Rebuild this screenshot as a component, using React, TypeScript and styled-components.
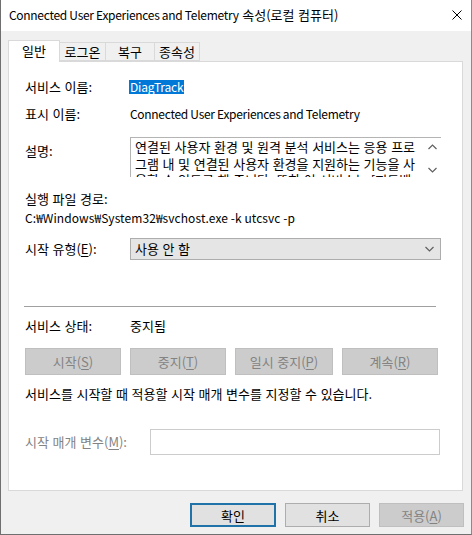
import React from 'react';
import styled, { createGlobalStyle } from 'styled-components';

const GlobalStyle = createGlobalStyle`
  html, body {
    margin: 0;
    padding: 0;
    background: #ffffff;
  }
  * {
    box-sizing: border-box;
  }
  body {
    font-family: "Noto Sans CJK KR", "Noto Sans", sans-serif;
    font-size: 13px;
    word-spacing: 0.7px;
    color: #000000;
  }
`;

const Window = styled.div`
  width: 472px;
  height: 535px;
  background: #f0f0f0;
  border-left: 1px solid #6f6f6f;
  border-right: 1px solid #8a8a8a;
  border-bottom: 1px solid #6f6f6f;
  display: flex;
  flex-direction: column;
  overflow: hidden;
`;

const TitleBar = styled.div`
  height: 31px;
  flex: none;
  background: #ffffff;
  display: flex;
  align-items: center;
  justify-content: space-between;
  padding: 0 9px 1px 8px;
`;

const TitleText = styled.div`
  line-height: 16px;
  white-space: nowrap;
`;

const Latin = styled.span<{ $tight?: number }>`
  font-size: 12px;
  letter-spacing: ${p => p.$tight ?? -0.3}px;
  word-spacing: 0;
`;

const CloseIcon = styled.svg`
  width: 10px;
  height: 10px;
`;

const Body = styled.div`
  flex: 1;
  display: flex;
  flex-direction: column;
  padding: 9px 8px 0 7px;
`;

const TabStrip = styled.div`
  height: 21px;
  display: flex;
  align-items: flex-end;
  position: relative;
  z-index: 1;
`;

const Tab = styled.div<{ $active?: boolean; $w: number }>`
  width: ${p => p.$w}px;
  height: ${p => (p.$active ? 22 : 19)}px;
  margin-bottom: ${p => (p.$active ? -1 : 0)}px;
  background: ${p => (p.$active ? '#ffffff' : '#f0f0f0')};
  border: 1px solid #d9d9d9;
  border-bottom: ${p => (p.$active ? 'none' : '1px solid #d9d9d9')};
  border-left: ${p => (p.$active ? '1px solid #d9d9d9' : 'none')};
  display: flex;
  align-items: center;
  justify-content: center;
  padding-bottom: ${p => (p.$active ? 2 : 0)}px;
  line-height: 16px;
`;

const Panel = styled.div`
  height: 430px;
  background: #ffffff;
  border: 1px solid #d9d9d9;
  padding: 17px 21px 0 16px;
  display: flex;
  flex-direction: column;
`;

const Row = styled.div<{ $top: number; $h?: number }>`
  margin-top: ${p => p.$top}px;
  min-height: ${p => p.$h ?? 16}px;
  display: flex;
  align-items: center;
  line-height: 16px;
  white-space: nowrap;
`;

const Label = styled.div<{ $w?: number; $disabled?: boolean }>`
  width: ${p => p.$w ?? 105}px;
  flex: none;
  color: ${p => (p.$disabled ? '#838383' : '#000000')};
`;

const Selected = styled(Latin)`
  background: #0078d7;
  color: #ffffff;
  padding: 0 1px;
  margin-left: -1px;
  line-height: 14px;
`;

const Key = styled.span`
  text-decoration: underline;
  text-underline-offset: 2px;
`;

const DescRow = styled.div`
  margin-top: 15px;
  display: flex;
  align-items: flex-start;
`;

const DescLabel = styled(Label)`
  padding-top: 6px;
  line-height: 16px;
`;

const DescBox = styled.div`
  width: 311px;
  height: 40px;
  border-top: 1px solid #b4b4b4;
  border-left: 1px solid #b4b4b4;
  display: flex;
  overflow: hidden;
`;

const DescText = styled.div`
  flex: 1;
  height: 39px;
  padding: 1px 0 0 4px;
  line-height: 16.5px;
  white-space: nowrap;
  overflow: hidden;
`;

const ScrollCol = styled.div`
  width: 17px;
  flex: none;
  display: flex;
  flex-direction: column;
  align-items: center;
  justify-content: space-between;
  padding: 6px 0 4px;
  background: #ffffff;
`;

const Combo = styled.div`
  width: 311px;
  height: 22px;
  background: #e5e5e5;
  border: 1px solid #adadad;
  display: flex;
  align-items: center;
  justify-content: space-between;
  padding: 0 6px 0 4px;
`;

const Separator = styled.div`
  margin-top: 46px;
  margin-left: -1px;
  width: 412px;
  height: 1px;
  background: #a0a0a0;
`;

const ButtonRow = styled.div`
  margin-top: 14px;
  display: flex;
  gap: 9px;
`;

const Button = styled.div<{ $w: number; $h?: number; $disabled?: boolean; $default?: boolean }>`
  width: ${p => p.$w}px;
  height: ${p => p.$h ?? 27}px;
  flex: none;
  display: flex;
  align-items: center;
  justify-content: center;
  white-space: nowrap;
  background: ${p => (p.$disabled ? '#cccccc' : '#e1e1e1')};
  border: ${p =>
    p.$default ? '2px solid #1f73a8' : p.$disabled ? '1px solid #bfbfbf' : '1px solid #adadad'};
  color: ${p => (p.$disabled ? '#838383' : '#000000')};
`;

const ParamInput = styled.div`
  width: 290px;
  height: 26px;
  background: #ffffff;
  border: 1px solid #cccccc;
`;

const Footer = styled.div`
  display: flex;
  justify-content: flex-end;
  gap: 9px;
  padding: 12px 0 0 0;
  margin-right: -1px;
`;

const Chevron = ({ dir }: { dir: 'up' | 'down' }) => (
  <svg width="9" height="6" viewBox="0 0 9 6">
    <path
      d={dir === 'up' ? 'M0.5 5 L4.5 1 L8.5 5' : 'M0.5 1 L4.5 5 L8.5 1'}
      fill="none"
      stroke="#606060"
      strokeWidth="1.2"
    />
  </svg>
);

export default function App() {
  return (
    <>
      <GlobalStyle />
      <Window>
        <TitleBar>
          <TitleText>
            <Latin>Connected User Experiences and Telemetry</Latin> 속성(로컬 컴퓨터)
          </TitleText>
          <CloseIcon viewBox="0 0 10 10">
            <path d="M0.5 0.5 L9.5 9.5 M9.5 0.5 L0.5 9.5" stroke="#000000" strokeWidth="1" />
          </CloseIcon>
        </TitleBar>
        <Body>
          <TabStrip>
            <Tab $active $w={52}>일반</Tab>
            <Tab $w={46}>로그온</Tab>
            <Tab $w={49}>복구</Tab>
            <Tab $w={45}>종속성</Tab>
          </TabStrip>
          <Panel>
            <Row $top={0}>
              <Label>서비스 이름:</Label>
              <Selected $tight={-0.2}>DiagTrack</Selected>
            </Row>
            <Row $top={11}>
              <Label>표시 이름:</Label>
              <Latin>Connected User Experiences and Telemetry</Latin>
            </Row>
            <DescRow>
              <DescLabel>설명:</DescLabel>
              <DescBox>
                <DescText>
                  <div>연결된 사용자 환경 및 원격 분석 서비스는 응용 프로</div>
                  <div>그램 내 및 연결된 사용자 환경을 지원하는 기능을 사</div>
                  <div>용할 수 있도록 해 줍니다. 또한 이 서비스는 [피드백</div>
                </DescText>
                <ScrollCol>
                  <Chevron dir="up" />
                  <Chevron dir="down" />
                </ScrollCol>
              </DescBox>
            </DescRow>
            <Row $top={14}>
              <span>실행 파일 경로:</span>
            </Row>
            <Row $top={3}>
              <Latin $tight={0.07}>C:₩Windows₩System32₩svchost.exe -k utcsvc -p</Latin>
            </Row>
            <Row $top={12} $h={22}>
              <Label>
                시작 유형(<Key>E</Key>):
              </Label>
              <Combo>
                <span>사용 안 함</span>
                <Chevron dir="down" />
              </Combo>
            </Row>
            <Separator />
            <Row $top={11}>
              <Label>서비스 상태:</Label>
              <span>중지됨</span>
            </Row>
            <ButtonRow>
              <Button $w={96} $disabled>
                시작(<Key>S</Key>)
              </Button>
              <Button $w={96} $disabled>
                중지(<Key>T</Key>)
              </Button>
              <Button $w={98} $disabled>
                일시 중지(<Key>P</Key>)
              </Button>
              <Button $w={96} $disabled>
                계속(<Key>R</Key>)
              </Button>
            </ButtonRow>
            <Row $top={11}>
              <span>서비스를 시작할 때 적용할 시작 매개 변수를 지정할 수 있습니다.</span>
            </Row>
            <Row $top={27} $h={26}>
              <Label $w={125} $disabled>
                시작 매개 변수(<Key>M</Key>):
              </Label>
              <ParamInput />
            </Row>
          </Panel>
          <Footer>
            <Button $w={86} $h={24} $default>확인</Button>
            <Button $w={85} $h={24}>취소</Button>
            <Button $w={85} $h={24} $disabled>
              적용(<Key>A</Key>)
            </Button>
          </Footer>
        </Body>
      </Window>
    </>
  );
}
